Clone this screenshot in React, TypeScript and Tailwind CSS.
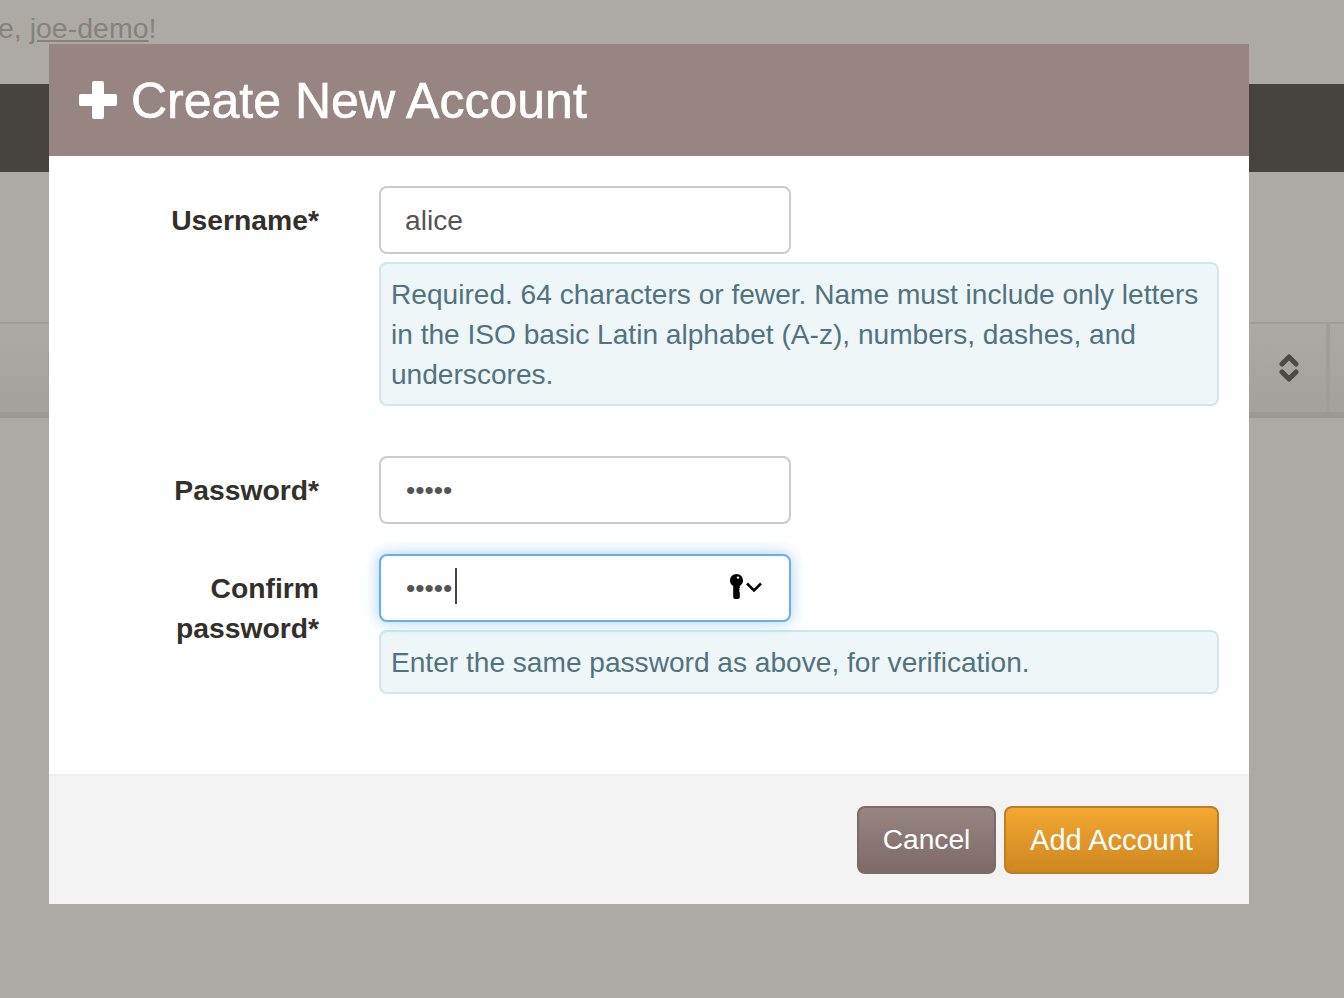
const font = "font-['Liberation_Sans',Arial,sans-serif]";

function PlusIcon() {
  return (
    <svg width="38" height="38" viewBox="0 0 38 38" className="shrink-0">
      <path
        d="M13 2a2 2 0 0 1 2-2h8a2 2 0 0 1 2 2v11h11a2 2 0 0 1 2 2v8a2 2 0 0 1-2 2H25v11a2 2 0 0 1-2 2h-8a2 2 0 0 1-2-2V25H2a2 2 0 0 1-2-2v-8a2 2 0 0 1 2-2h11z"
        fill="#fff"
      />
    </svg>
  );
}

function SortIcon() {
  return (
    <svg width="20" height="28" viewBox="0 0 20 28" fill="none" stroke="#4d4a45" strokeWidth="5" strokeLinecap="round" strokeLinejoin="round">
      <path d="M3 10l7-7 7 7" />
      <path d="M3 18l7 7 7-7" />
    </svg>
  );
}

function KeyIcon() {
  return (
    <div className="absolute left-[351px] top-[20px] flex items-start gap-[3px]">
      <svg width="13" height="25" viewBox="0 0 13 25">
        <path
          d="M6.500 0C10.100 0 13 2.900 13 6.500c0 2.500-1.300 4.500-3.200 5.600V14l-.8.700.8.800-.8.700.8.800-.8.700.8.800V23a2 2 0 0 1-2 2H5.200a2 2 0 0 1-2-2V12.100C1.300 11 0 9 0 6.500 0 2.900 2.900 0 6.500 0z"
          fill="#000"
        />
        <circle cx="8" cy="3.600" r="1.200" fill="#fff" />
      </svg>
      <svg width="16" height="10" viewBox="0 0 16 10" fill="none" stroke="#000" strokeWidth="2.500" className="mt-[8px]">
        <path d="M1 1.500l7 7 7-7" />
      </svg>
    </div>
  );
}

function HelpBox({ children }: { children: React.ReactNode }) {
  return (
    <div className="mt-2 rounded-lg border-2 border-[#cfe6ee] bg-[#eef6f8] px-[10px] pt-[11px] pb-[9px] text-[28.100px] leading-[40px] text-[#50737f]">
      {children}
    </div>
  );
}

function Field({
  label,
  type,
  value,
  focused,
  children,
}: {
  label: string;
  type: string;
  value: string;
  focused?: boolean;
  children?: React.ReactNode;
}) {
  return (
    <div className="flex gap-[60px]">
      <label className="w-[240px] shrink-0 pt-[14px] text-right text-[28.300px] font-bold leading-[40px] text-[#33302c]">
        {label}
      </label>
      <div className="w-[840px]">
        <div className="relative h-[68px] w-[412px]">
          <input
            type={type}
            defaultValue={value}
            readOnly
            className={
              focused
                ? "block h-full w-full rounded-lg border-2 border-[#66afe9] bg-white pl-[25px] pr-6 text-[26.500px] text-[#555] outline-none shadow-[0_0_16px_rgba(102,175,233,0.6)]"
                : type === "password"
                  ? "block h-full w-full rounded-lg border-2 border-[#ccc] bg-white pl-[25px] pr-6 text-[26.500px] text-[#555] outline-none"
                  : "block h-full w-full rounded-lg border-2 border-[#ccc] bg-white px-6 pt-[1px] text-[28.200px] text-[#555] outline-none"
            }
          />
          {focused && (
            <>
              <span className="absolute left-[76px] top-[14px] h-[36px] w-[2px] bg-[#444]" />
              <KeyIcon />
            </>
          )}
        </div>
        {children}
      </div>
    </div>
  );
}

export default function App() {
  return (
    <div className={`relative h-[998px] w-[1344px] overflow-hidden bg-[#adaaa5] ${font}`}>
      <div className="h-[84px] pt-2 text-[28.500px] leading-10 text-[#85827b]">
        <span className="-ml-[2px]">
          e, <a className="underline">joe-demo</a>!
        </span>
      </div>
      <div className="h-[88px] bg-[#46423d]" />
      <div className="mt-[150px] flex h-[96px] justify-end border-t-2 border-b-[6px] border-t-[#a19e99] border-b-[#9c9994] bg-gradient-to-b from-[#adaaa5] to-[#a4a19c]">
        <div className="flex items-center pr-[27px]">
          <SortIcon />
        </div>
        <div className="mr-[14px] w-[4px] bg-[#a19e99]" />
      </div>

      <div className="absolute left-[49px] top-[44px] w-[1200px] bg-white">
        <div className="flex h-[112px] items-center gap-[14px] bg-[#978583] px-[30px]">
          <PlusIcon />
          <h3 className="pt-[2px] text-[50px] leading-none text-white [-webkit-text-stroke:0.6px_white]">
            Create New Account
          </h3>
        </div>

        <div className="px-[30px] pt-[30px] pb-[80px]">
          <Field label="Username*" type="text" value="alice">
            <HelpBox>
              Required. 64 characters or fewer. Name must include only letters in the ISO basic Latin alphabet (A-z), numbers, dashes, and underscores.
            </HelpBox>
          </Field>
          <div className="mt-[50px]">
            <Field label="Password*" type="password" value="alice" />
          </div>
          <div className="mt-[30px]">
            <Field label="Confirm password*" type="password" value="alice" focused>
              <HelpBox>Enter the same password as above, for verification.</HelpBox>
            </Field>
          </div>
        </div>

        <div className="flex h-[130px] justify-end gap-2 border-t-2 border-[#eeeeee] bg-[#f3f3f3] px-[30px] pt-[30px]">
          <button className="h-[68px] w-[139px] rounded-lg border-2 border-[#7b6a69] bg-gradient-to-b from-[#978583] to-[#7d6a69] pb-[2px] text-[28.200px] text-white">
            Cancel
          </button>
          <button className="h-[68px] w-[215px] rounded-lg border-2 border-[#c27d1f] bg-gradient-to-b from-[#f3a833] to-[#cf8620] pt-[2px] text-[29px] text-white">
            Add Account
          </button>
        </div>
      </div>
    </div>
  );
}
